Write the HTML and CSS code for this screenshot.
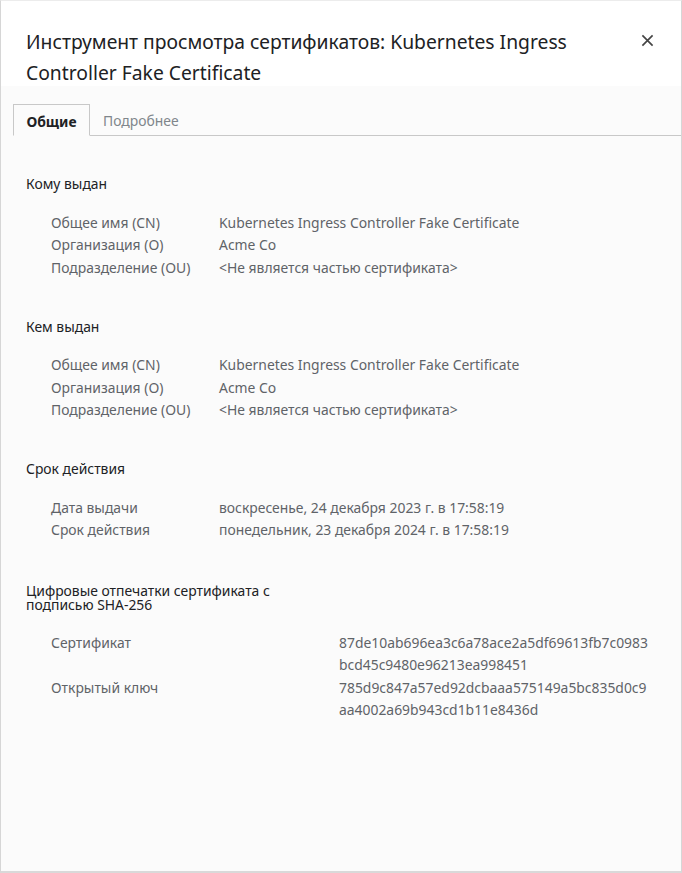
FILE: index.html
```html
<!DOCTYPE html>
<html lang="ru">
<head>
<meta charset="utf-8">
<link rel="stylesheet" href="styles.css">
</head>
<body>
<div class="dialog">
  <header class="head">
    <h1 class="title">Инструмент просмотра сертификатов: Kubernetes Ingress Controller Fake Certificate</h1>
    <button class="close" aria-label="Закрыть">
      <svg width="14" height="14" viewBox="0 0 14 14"><path d="M1.5 1.5 L12.5 12.5 M12.5 1.5 L1.5 12.5" stroke="#444" stroke-width="1.8" fill="none"/></svg>
    </button>
  </header>
  <div class="body">
    <div class="tabs">
      <div class="tab active">Общие</div>
      <div class="tab">Подробнее</div>
      <div class="tab-rest"></div>
    </div>
    <div class="content">
      <section class="sect">
        <h2 class="sect-title">Кому выдан</h2>
        <div class="rows">
          <div class="row"><span class="lbl">Общее имя (CN)</span><span class="val">Kubernetes Ingress Controller Fake Certificate</span></div>
          <div class="row"><span class="lbl">Организация (O)</span><span class="val">Acme Co</span></div>
          <div class="row"><span class="lbl">Подразделение (OU)</span><span class="val">&lt;Не является частью сертификата&gt;</span></div>
        </div>
      </section>
      <section class="sect">
        <h2 class="sect-title">Кем выдан</h2>
        <div class="rows">
          <div class="row"><span class="lbl">Общее имя (CN)</span><span class="val">Kubernetes Ingress Controller Fake Certificate</span></div>
          <div class="row"><span class="lbl">Организация (O)</span><span class="val">Acme Co</span></div>
          <div class="row"><span class="lbl">Подразделение (OU)</span><span class="val">&lt;Не является частью сертификата&gt;</span></div>
        </div>
      </section>
      <section class="sect">
        <h2 class="sect-title">Срок действия</h2>
        <div class="rows">
          <div class="row"><span class="lbl">Дата выдачи</span><span class="val">воскресенье, 24 декабря 2023 г. в 17:58:19</span></div>
          <div class="row"><span class="lbl">Срок действия</span><span class="val">понедельник, 23 декабря 2024 г. в 17:58:19</span></div>
        </div>
      </section>
      <section class="sect fp-sect">
        <h2 class="sect-title narrow">Цифровые отпечатки сертификата с подписью SHA-256</h2>
        <div class="rows fp">
          <div class="row"><span class="lbl">Сертификат</span><span class="val hash">87de10ab696ea3c6a78ace2a5df69613fb7c0983bcd45c9480e96213ea998451</span></div>
          <div class="row"><span class="lbl">Открытый ключ</span><span class="val hash">785d9c847a57ed92dcbaaa575149a5bc835d0c9aa4002a69b943cd1b11e8436d</span></div>
        </div>
      </section>
    </div>
  </div>
</div>
</body>
</html>
```

FILE: styles.css
```css
* { box-sizing: border-box; }
html, body { margin: 0; padding: 0; background: #fff; }
body {
  font-family: "Noto Sans", "Open Sans", sans-serif;
  color: #202124;
}
.dialog {
  width: 682px;
  height: 873px;
  display: flex;
  flex-direction: column;
  border-left: 1px solid #d6d6d6;
  border-right: 1px solid #d6d6d6;
  border-top: 1px solid #ececec;
  border-bottom: 2px solid #d9d9d9;
  background: #fbfbfb;
}
.head {
  background: #fff;
  height: 85px;
  display: flex;
  align-items: flex-start;
  justify-content: space-between;
  padding: 26px 27px 0 25px;
}
.title {
  margin: 0;
  font-size: 19.3px;
  font-weight: 400;
  line-height: 30.5px;
  color: #202124;
  width: 580px;
}
.close {
  border: none;
  background: none;
  padding: 0;
  margin-top: 7px;
  width: 13px;
  height: 13px;
  display: flex;
}
.close svg { width: 13px; height: 13px; }
.body {
  flex: 1;
  background: #fbfbfb;
  padding-top: 18px;
}
.tabs {
  display: flex;
  padding-left: 12px;
  height: 32px;
}
.tab {
  font-size: 13.9px;
  height: 32px;
  line-height: 34px;
  padding: 0 13px;
  color: #80868b;
  border-bottom: 1px solid #c8c8c8;
}
.tab.active {
  width: 77px;
  text-align: center;
  padding: 0;
  font-weight: 700;
  color: #202124;
  border: 1px solid #c8c8c8;
  border-bottom: 1px solid transparent;
}
.tab-rest {
  flex: 1;
  border-bottom: 1px solid #c8c8c8;
}
.content {
  padding: 37px 0 0 25px;
}
.sect { margin-bottom: 36.5px; }
.fp-sect { padding-top: 6px; }
.sect-title {
  margin: 0;
  font-size: 13.9px;
  font-weight: 400;
  line-height: 22px;
  color: #202124;
}
.sect-title.narrow {
  width: 270px;
  line-height: 13.5px;
}
.rows {
  margin-top: 16.5px;
  padding-left: 25px;
  display: flex;
  flex-direction: column;
}
.fp { margin-top: 21px; }
.row {
  display: flex;
  font-size: 13.9px;
  line-height: 22.5px;
  color: #5f6368;
}
.fp .row { line-height: 22.3px; }
.lbl { width: 168px; flex: none; }
.fp .lbl { width: 288px; }
.val { color: #5f6368; }
.hash {
  width: 313px;
  word-break: break-all;
}
```
